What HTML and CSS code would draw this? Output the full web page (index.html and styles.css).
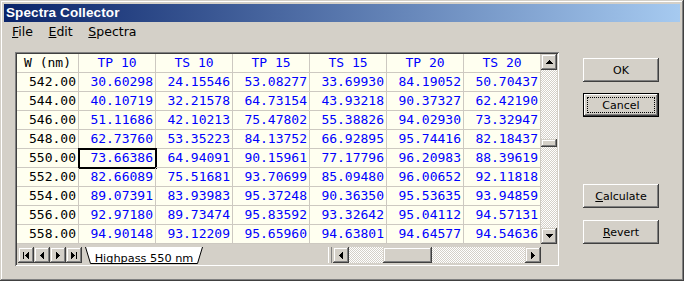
FILE: index.html
```html
<!DOCTYPE html>
<html lang="en">
<head>
    <meta charset="UTF-8">
    <title>Spectra Collector</title>
    <link rel="stylesheet" href="styles.css">
</head>
<body>
<div class="window">
    <div class="titlebar">Spectra Collector</div>
    <div class="menubar">
        <span class="menu"><u>F</u>ile</span>
        <span class="menu"><u>E</u>dit</span>
        <span class="menu"><u>S</u>pectra</span>
    </div>
    <div class="client">
        <div class="frame">
            <div class="sheet">
                <div class="grid">
                    <div class="cell head wl">W (nm)</div><div class="cell head">TP 10</div><div class="cell head">TS 10</div><div class="cell head">TP 15</div><div class="cell head">TS 15</div><div class="cell head">TP 20</div><div class="cell head">TS 20</div>
                    <div class="cell wl">542.00</div><div class="cell">30.60298</div><div class="cell">24.15546</div><div class="cell">53.08277</div><div class="cell">33.69930</div><div class="cell">84.19052</div><div class="cell">50.70437</div>
                    <div class="cell wl">544.00</div><div class="cell">40.10719</div><div class="cell">32.21578</div><div class="cell">64.73154</div><div class="cell">43.93218</div><div class="cell">90.37327</div><div class="cell">62.42190</div>
                    <div class="cell wl">546.00</div><div class="cell">51.11686</div><div class="cell">42.10213</div><div class="cell">75.47802</div><div class="cell">55.38826</div><div class="cell">94.02930</div><div class="cell">73.32947</div>
                    <div class="cell wl">548.00</div><div class="cell">62.73760</div><div class="cell">53.35223</div><div class="cell">84.13752</div><div class="cell">66.92895</div><div class="cell">95.74416</div><div class="cell">82.18437</div>
                    <div class="cell wl">550.00</div><div class="cell sel">73.66386</div><div class="cell">64.94091</div><div class="cell">90.15961</div><div class="cell">77.17796</div><div class="cell">96.20983</div><div class="cell">88.39619</div>
                    <div class="cell wl">552.00</div><div class="cell">82.66089</div><div class="cell">75.51681</div><div class="cell">93.70699</div><div class="cell">85.09480</div><div class="cell">96.00652</div><div class="cell">92.11818</div>
                    <div class="cell wl">554.00</div><div class="cell">89.07391</div><div class="cell">83.93983</div><div class="cell">95.37248</div><div class="cell">90.36350</div><div class="cell">95.53635</div><div class="cell">93.94859</div>
                    <div class="cell wl">556.00</div><div class="cell">92.97180</div><div class="cell">89.73474</div><div class="cell">95.83592</div><div class="cell">93.32642</div><div class="cell">95.04112</div><div class="cell">94.57131</div>
                    <div class="cell wl">558.00</div><div class="cell">94.90148</div><div class="cell">93.12209</div><div class="cell">95.65960</div><div class="cell">94.63801</div><div class="cell">94.64577</div><div class="cell">94.54636</div>
                </div>
                <div class="vscroll">
                    <div class="arrow"><svg width="7" height="4" viewBox="0 0 7 4"><path d="M3 0h1v1H3z M2 1h3v1H2z M1 2h5v1H1z M0 3h7v1H0z"/></svg></div>
                    <div class="track-v"><div class="thumb-v"></div></div>
                    <div class="arrow"><svg width="7" height="4" viewBox="0 0 7 4"><path d="M0 0h7v1H0z M1 1h5v1H1z M2 2h3v1H2z M3 3h1v1H3z"/></svg></div>
                </div>
            </div>
            <div class="tabbar">
                <div class="nav">
                    <div class="arrow"><svg width="6" height="7" viewBox="0 0 6 7"><path d="M0 0h1v7H0z M5 0h1v7H5z M4 1h1v5H4z M3 2h1v3H3z M2 3h1v1H2z"/></svg></div>
                    <div class="arrow"><svg width="4" height="7" viewBox="0 0 4 7"><path d="M3 0h1v7H3z M2 1h1v5H2z M1 2h1v3H1z M0 3h1v1H0z"/></svg></div>
                    <div class="arrow"><svg width="4" height="7" viewBox="0 0 4 7"><path d="M0 0h1v7H0z M1 1h1v5H1z M2 2h1v3H2z M3 3h1v1H3z"/></svg></div>
                    <div class="arrow"><svg width="6" height="7" viewBox="0 0 6 7"><path d="M0 0h1v7H0z M1 1h1v5H1z M2 2h1v3H2z M3 3h1v1H3z M5 0h1v7H5z"/></svg></div>
                </div>
                <div class="tab">
                    <svg class="tab-shape" width="124" height="17" viewBox="0 0 124 17"><path d="M3.5 0 L8.5 16.5 L115.5 16.5 L120.5 0" fill="#fff" stroke="#000"/></svg>
                    <span class="tab-label">Highpass 550 nm</span>
                </div>
                <div class="splitter"></div>
                <div class="hscroll">
                    <div class="arrow"><svg width="4" height="7" viewBox="0 0 4 7"><path d="M3 0h1v7H3z M2 1h1v5H2z M1 2h1v3H1z M0 3h1v1H0z"/></svg></div>
                    <div class="track-h"><div class="thumb-h"></div></div>
                    <div class="arrow"><svg width="4" height="7" viewBox="0 0 4 7"><path d="M0 0h1v7H0z M1 1h1v5H1z M2 2h1v3H2z M3 3h1v1H3z"/></svg></div>
                </div>
                <div class="corner"></div>
            </div>
        </div>
        <div class="buttons">
            <button class="btn">OK</button>
            <button class="btn default cancel">Cancel</button>
            <button class="btn calc"><u>C</u>alculate</button>
            <button class="btn revert"><u>R</u>evert</button>
        </div>
    </div>
</div>
</body>
</html>
```
FILE: styles.css
```css
*{
    margin: 0;
    padding: 0;
    box-sizing: border-box;
}
body{
    width: 684px;
    height: 281px;
    overflow: hidden;
    background-color: #d4d0c8;
    font-family: "DejaVu Sans", sans-serif;
}
.window{
    width: 684px;
    height: 281px;
    padding: 4px;
    display: flex;
    flex-direction: column;
    background-color: #d4d0c8;
    box-shadow: inset -1px -1px #404040, inset 1px 1px #d4d0c8, inset -2px -2px #808080, inset 2px 2px #fff;
}
.titlebar{
    height: 18px;
    padding-left: 2px;
    background: linear-gradient(to right, #0a246a, #a6caf0);
    color: #fff;
    font: bold 13.5px "Liberation Sans", sans-serif;
    line-height: 18px;
    letter-spacing: 0.1px;
}
.menubar{
    height: 19px;
    display: flex;
    font-size: 12.5px;
    line-height: 20px;
    color: #000;
}
.menu{
    padding: 0 7.6px 0 8px;
}
.client{
    display: flex;
    padding: 11px 0 0 11px;
}

/* sheet */
.frame{
    width: 544px;
    height: 214px;
    padding: 2px;
    box-shadow: inset 1px 1px #808080, inset -1px -1px #fff, inset 2px 2px #404040, inset -2px -2px #d4d0c8;
}
.sheet{
    display: flex;
}
.grid{
    display: grid;
    grid-template-columns: 62px repeat(6, 77px);
    background-color: #fffff0;
}
.cell{
    height: 19px;
    padding-right: 2px;
    border-right: 1px solid #cdc9c1;
    border-bottom: 1px solid #cdc9c1;
    font: 13px "DejaVu Sans Mono", monospace;
    line-height: 18px;
    text-align: right;
    color: #0000ff;
    white-space: nowrap;
    overflow: hidden;
}
.cell.head{
    text-align: center;
    padding: 0;
}
.cell.wl{
    color: #000;
}
.cell.sel{
    outline: 2px solid #000;
    outline-offset: -1px;
}
.arrow{
    width: 16px;
    height: 16px;
    flex: none;
    display: flex;
    align-items: center;
    justify-content: center;
    background-color: #d4d0c8;
    box-shadow: inset -1px -1px #404040, inset 1px 1px #d4d0c8, inset -2px -2px #808080, inset 2px 2px #fff;
}
.arrow svg{
    display: block;
    fill: #000;
}
.vscroll{
    width: 16px;
    height: 190px;
    display: flex;
    flex-direction: column;
}
.track-v, .track-h{
    flex: 1;
    background: repeating-conic-gradient(#fff 0 25%, #d4d0c8 0 50%) 0 0 / 2px 2px;
}
.thumb-v{
    height: 8px;
    margin-top: 69px;
    background-color: #d4d0c8;
    box-shadow: inset -1px -1px #404040, inset 1px 1px #d4d0c8, inset -2px -2px #808080, inset 2px 2px #fff;
}

/* tabs + horizontal scroll */
.tabbar{
    height: 20px;
    display: flex;
    padding-top: 3px;
    background-color: #d4d0c8;
}
.nav{
    display: flex;
    margin-left: 1px;
}
.tab{
    position: relative;
    width: 124px;
    height: 17px;
    flex: none;
    text-align: center;
}
.tab-shape{
    position: absolute;
    left: 0;
    top: 0;
}
.tab-label{
    position: relative;
    font-size: 11.3px;
    line-height: 15px;
    color: #000;
}
.splitter{
    width: 4px;
    height: 16px;
    margin-left: auto;
    margin-right: 1px;
    box-shadow: inset -1px 0 #808080, inset 1px 0 #fff;
}
.hscroll{
    width: 208px;
    height: 16px;
    display: flex;
}
.thumb-h{
    width: 49px;
    height: 16px;
    margin-left: 34px;
    background-color: #d4d0c8;
    box-shadow: inset -1px -1px #404040, inset 1px 1px #d4d0c8, inset -2px -2px #808080, inset 2px 2px #fff;
}
.corner{
    width: 16px;
    flex: none;
}

/* dialog buttons */
.buttons{
    display: flex;
    flex-direction: column;
    margin-left: 24px;
    padding-top: 6px;
}
.btn{
    width: 76px;
    height: 24px;
    border: none;
    outline: none;
    background-color: #d4d0c8;
    color: #000;
    font: 11px "DejaVu Sans", sans-serif;
    box-shadow: inset -1px -1px #404040, inset 1px 1px #fff, inset -2px -2px #808080, inset 2px 2px #d4d0c8;
}
.btn.default{
    box-shadow: inset 0 0 0 1px #000, inset -2px -2px #404040, inset 2px 2px #fff, inset -3px -3px #808080, inset 3px 3px #d4d0c8;
    outline: 1px dotted #000;
    outline-offset: -5px;
}
.cancel{
    margin-top: 11px;
}
.calc{
    margin-top: 67px;
}
.revert{
    margin-top: 12px;
}
```
